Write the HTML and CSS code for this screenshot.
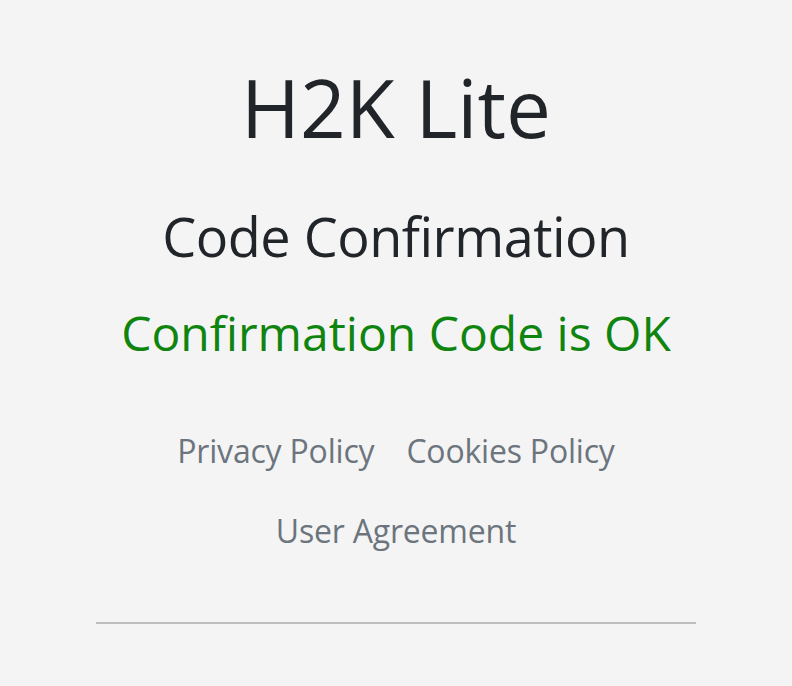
FILE: index.html
```html
<!DOCTYPE html>
<html lang="en">
<head>
<meta charset="utf-8">
<title>H2K Lite - Code Confirmation</title>
<link rel="stylesheet" href="styles.css">
</head>
<body>
<main class="page">
  <h1 class="brand">H2K Lite</h1>
  <h2 class="title">Code Confirmation</h2>
  <p class="status">Confirmation Code is OK</p>
  <nav class="links">
    <div class="links-row">
      <a href="#" class="link">Privacy Policy</a>
      <a href="#" class="link">Cookies Policy</a>
    </div>
    <div class="links-row">
      <a href="#" class="link">User Agreement</a>
    </div>
  </nav>
  <hr class="rule">
</main>
</body>
</html>
```
FILE: styles.css
```css
html, body {
  margin: 0;
  padding: 0;
  background: #f4f4f4;
}
body {
  font-family: "Open Sans", "Noto Sans", sans-serif;
  color: #212529;
}
.page {
  width: 600px;
  margin: 0 auto;
  padding-top: 59px;
  display: flex;
  flex-direction: column;
  align-items: center;
  text-align: center;
}
.brand {
  margin: 0;
  font-size: 80px;
  font-weight: 400;
  line-height: 96px;
}
.title {
  margin: 49px 0 0;
  font-size: 54px;
  font-weight: 400;
  letter-spacing: -0.5px;
  line-height: 65px;
}
.status {
  margin: 35px 0 0;
  font-size: 48px;
  line-height: 58px;
  color: #0f840f;
}
.links {
  margin-top: 70px;
  display: flex;
  flex-direction: column;
  align-items: center;
  gap: 42px;
}
.links-row {
  display: flex;
  gap: 32px;
}
.link {
  font-size: 32px;
  line-height: 38px;
  letter-spacing: -0.2px;
  color: #6c757d;
  text-decoration: none;
}
.rule {
  align-self: stretch;
  margin: 72px 0 0;
  border: 0;
  border-top: 2px solid #bdbdbd;
}
```
